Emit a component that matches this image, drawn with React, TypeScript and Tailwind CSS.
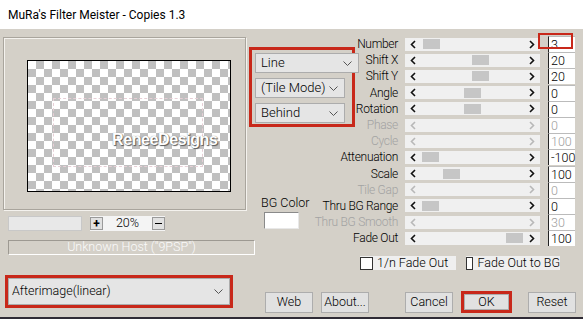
import React from 'react';

type Row = {
  label: string;
  value: string;
  thumb?: number;
  disabled?: boolean;
  highlight?: boolean;
};

const rows: Row[] = [
  { label: 'Number', value: '3', thumb: 18, highlight: true },
  { label: 'Shift X', value: '20', thumb: 67 },
  { label: 'Shift Y', value: '20', thumb: 67 },
  { label: 'Angle', value: '0', thumb: 59 },
  { label: 'Rotation', value: '0', thumb: 59 },
  { label: 'Phase', value: '0', disabled: true },
  { label: 'Cycle', value: '100', disabled: true },
  { label: 'Attenuation', value: '-100', thumb: 17 },
  { label: 'Scale', value: '100', thumb: 38 },
  { label: 'Tile Gap', value: '0', disabled: true },
  { label: 'Thru BG Range', value: '0', thumb: 17 },
  { label: 'Thru BG Smooth', value: '30', disabled: true },
  { label: 'Fade Out', value: '100', thumb: 101 },
];

const Chevron = () => (
  <svg width="9" height="5" viewBox="0 0 9 5" className="shrink-0">
    <polyline points="0.5,0.5 4.5,4.5 8.5,0.5" fill="none" stroke="#555" strokeWidth="1" />
  </svg>
);

const Arrow = ({ dir, disabled }: { dir: 'left' | 'right'; disabled?: boolean }) => (
  <svg width="6" height="9" viewBox="0 0 6 9">
    <polyline
      points={dir === 'left' ? '5,1 1.5,4.5 5,8' : '1,1 4.5,4.5 1,8'}
      fill="none"
      stroke={disabled ? '#b8b8b8' : '#111'}
      strokeWidth="1.6"
    />
  </svg>
);

const Combo = ({ text, width }: { text: string; width: string }) => (
  <div
    className={`${width} h-[20px] bg-[#e5e5e5] border border-[#acacac] flex items-center justify-between pl-[5px] pr-[6px] text-[13px]`}
  >
    <span>{text}</span>
    <Chevron />
  </div>
);

const Button = ({ label, className = 'w-[48px] h-[21px]' }: { label: string; className?: string }) => (
  <div
    className={`${className} bg-[#e1e1e1] border border-[#adadad] flex items-center justify-center text-[12.5px]`}
  >
    {label}
  </div>
);

const SliderRow = ({ row }: { row: Row }) => (
  <div className="h-[16.2px] flex items-center">
    {/* label overflows to the left */}
    <div
      className={`w-[38px] flex justify-end whitespace-nowrap text-[12px] tracking-[-0.3px] ${
        row.disabled ? 'text-[#a3a3a3]' : 'text-black'
      }`}
    >
      {row.label}
    </div>
    <div className="ml-[7px] w-[135px] h-[13px] bg-[#f0f0f0] relative flex items-center justify-between px-[5px]">
      <Arrow dir="left" disabled={row.disabled} />
      <Arrow dir="right" disabled={row.disabled} />
      {row.thumb !== undefined && (
        <div className="absolute top-[1.5px] w-[17px] h-[10px] bg-[#c6c6c6]" style={{ left: row.thumb }} />
      )}
    </div>
    <div className="ml-[8px] relative">
      <div
        className={`w-[27px] h-[16px] bg-white border-l border-l-[#222] border-t border-t-[#bbb] pl-[2px] text-[12.5px] leading-[15px] ${
          row.disabled ? 'text-[#a0a0a0]' : 'text-black'
        }`}
      >
        {row.value}
      </div>
      {row.highlight && (
        <div className="absolute -left-[10px] -top-[3px] w-[35px] h-[16px] border-[2.5px] border-[#c8281a]" />
      )}
    </div>
  </div>
);

export default function App() {
  return (
    <div className="w-[583px] h-[319px] bg-[#d4d0c8] font-['Roboto','Liberation_Sans',Arial,sans-serif] font-light text-black overflow-hidden flex flex-col">
      {/* Title bar */}
      <div className="h-[29px] shrink-0 bg-white flex items-center pl-[8px] text-[12px] font-normal">
        MuRa's Filter Meister - Copies 1.3
      </div>

      <div className="flex-1 flex pl-[3px]">
        {/* Left column */}
        <div className="w-[246px] shrink-0 flex flex-col">
          <div className="mt-[8px] w-[243px] h-[173px] border border-[#a9a59d] shadow-[inset_1px_1px_0_#f4f2ee,1px_1px_0_#f4f2ee] pl-[23px] pt-[22px]">
            <div className="w-[204px] h-[132px] border border-black relative bg-[conic-gradient(#c0c0c0_25%,#fff_0_50%,#c0c0c0_0_75%,#fff_0)] bg-size-[16px_16px]">
              <div className="absolute left-[25px] top-[37px] w-[150px] h-[69px] border border-dashed border-[#e6cfd6]" />
              <div className="absolute left-[84px] top-[71px] font-['Liberation_Sans',Arial,sans-serif] text-[16px] leading-none font-bold text-white tracking-[-0.4px] [text-shadow:1px_1px_1px_#555,0_0_1px_#777]">
                ReneeDesigns
              </div>
            </div>
          </div>

          {/* Zoom row */}
          <div className="mt-[6px] flex items-center">
            <div className="ml-[5px] w-[74px] h-[15px] bg-[#e8e8e8] border border-[#c8c8c8]" />
            <div className="ml-[8px] w-[75px] h-[15px] bg-[#f4f4f4] flex items-center justify-between">
              <div className="w-[13px] h-[13px] bg-[#e1e1e1] border border-[#9a9a9a] flex items-center justify-center text-[12px] font-bold leading-none">
                +
              </div>
              <span className="text-[12.5px]">20%</span>
              <div className="w-[13px] h-[13px] bg-[#e1e1e1] border border-[#9a9a9a] flex items-center justify-center">
                <div className="w-[7px] h-[1.5px] bg-black" />
              </div>
            </div>
          </div>

          {/* Host status */}
          <div className="mt-[9px] ml-[5px] w-[247px] h-[15px] border border-t-[#9d9992] border-l-[#9d9992] border-r-white border-b-white flex items-center justify-center text-[12.5px] text-[#fafafa]">
            Unknown Host ("9PSP")
          </div>

          {/* Preset combo */}
          <div className="mt-[20px] ml-[2px] w-[228px] h-[33px] border-[3px] border-[#c8281a]">
            <div className="w-full h-full bg-[#e5e5e5] border border-[#acacac] flex items-center justify-between pl-[3px] pr-[6px] text-[12.5px]">
              <span>Afterimage(linear)</span>
              <Chevron />
            </div>
          </div>
        </div>

        {/* Right area */}
        <div className="flex-1 flex flex-col">
          <div className="flex">
            {/* Middle column */}
            <div className="w-[111px] shrink-0 flex flex-col">
              <div className="mt-[18px] w-[106px] h-[80px] border-[3px] border-[#c8281a] pl-[3px] pt-[3px] flex flex-col gap-[5px]">
                <Combo text="Line" width="w-[104px]" />
                <Combo text="(Tile Mode)" width="w-[90px]" />
                <Combo text="Behind" width="w-[90px]" />
              </div>
              <div className="mt-[69px] ml-[12px] text-[12.5px] leading-[14px]">BG Color</div>
              <div className="mt-[2px] ml-[15px] w-[35px] h-[17px] bg-white border border-t-[#8a8a8a] border-l-[#8a8a8a] border-r-[#e8e8e8] border-b-[#e8e8e8]" />
            </div>

            {/* Sliders */}
            <div className="pt-[7px] flex flex-col">
              {rows.map((row) => (
                <SliderRow key={row.label} row={row} />
              ))}
            </div>
          </div>

          {/* Checkboxes */}
          <div className="mt-[10px] pl-[111px] flex items-center text-[12.5px] whitespace-nowrap">
            <div className="w-[96px] h-[14px] bg-[#efefef] flex items-center">
              <div className="w-[13px] h-[13px] bg-white border border-[#333]" />
              <span className="ml-[4px]">1/n Fade Out</span>
            </div>
            <div className="ml-[10px] w-[94px] h-[14px] bg-[#efefef] flex items-center">
              <div className="w-[13px] h-[13px] bg-white border border-[#333]" />
              <span className="ml-[4px]">Fade Out to BG</span>
            </div>
          </div>

          {/* Buttons */}
          <div className="mt-[21px] pl-[16px] flex items-center">
            <Button label="Web" />
            <div className="ml-[8px]">
              <Button label="About..." />
            </div>
            <div className="ml-[36px]">
              <Button label="Cancel" />
            </div>
            <div className="ml-[8px] w-[51px] h-[22px] border-[3px] border-[#c8281a]">
              <Button label="OK" className="w-full h-full" />
            </div>
            <div className="ml-[16px]">
              <Button label="Reset" />
            </div>
          </div>
        </div>
      </div>

      <div className="h-[2px] shrink-0 bg-[#2f2b35]" />
    </div>
  );
}
